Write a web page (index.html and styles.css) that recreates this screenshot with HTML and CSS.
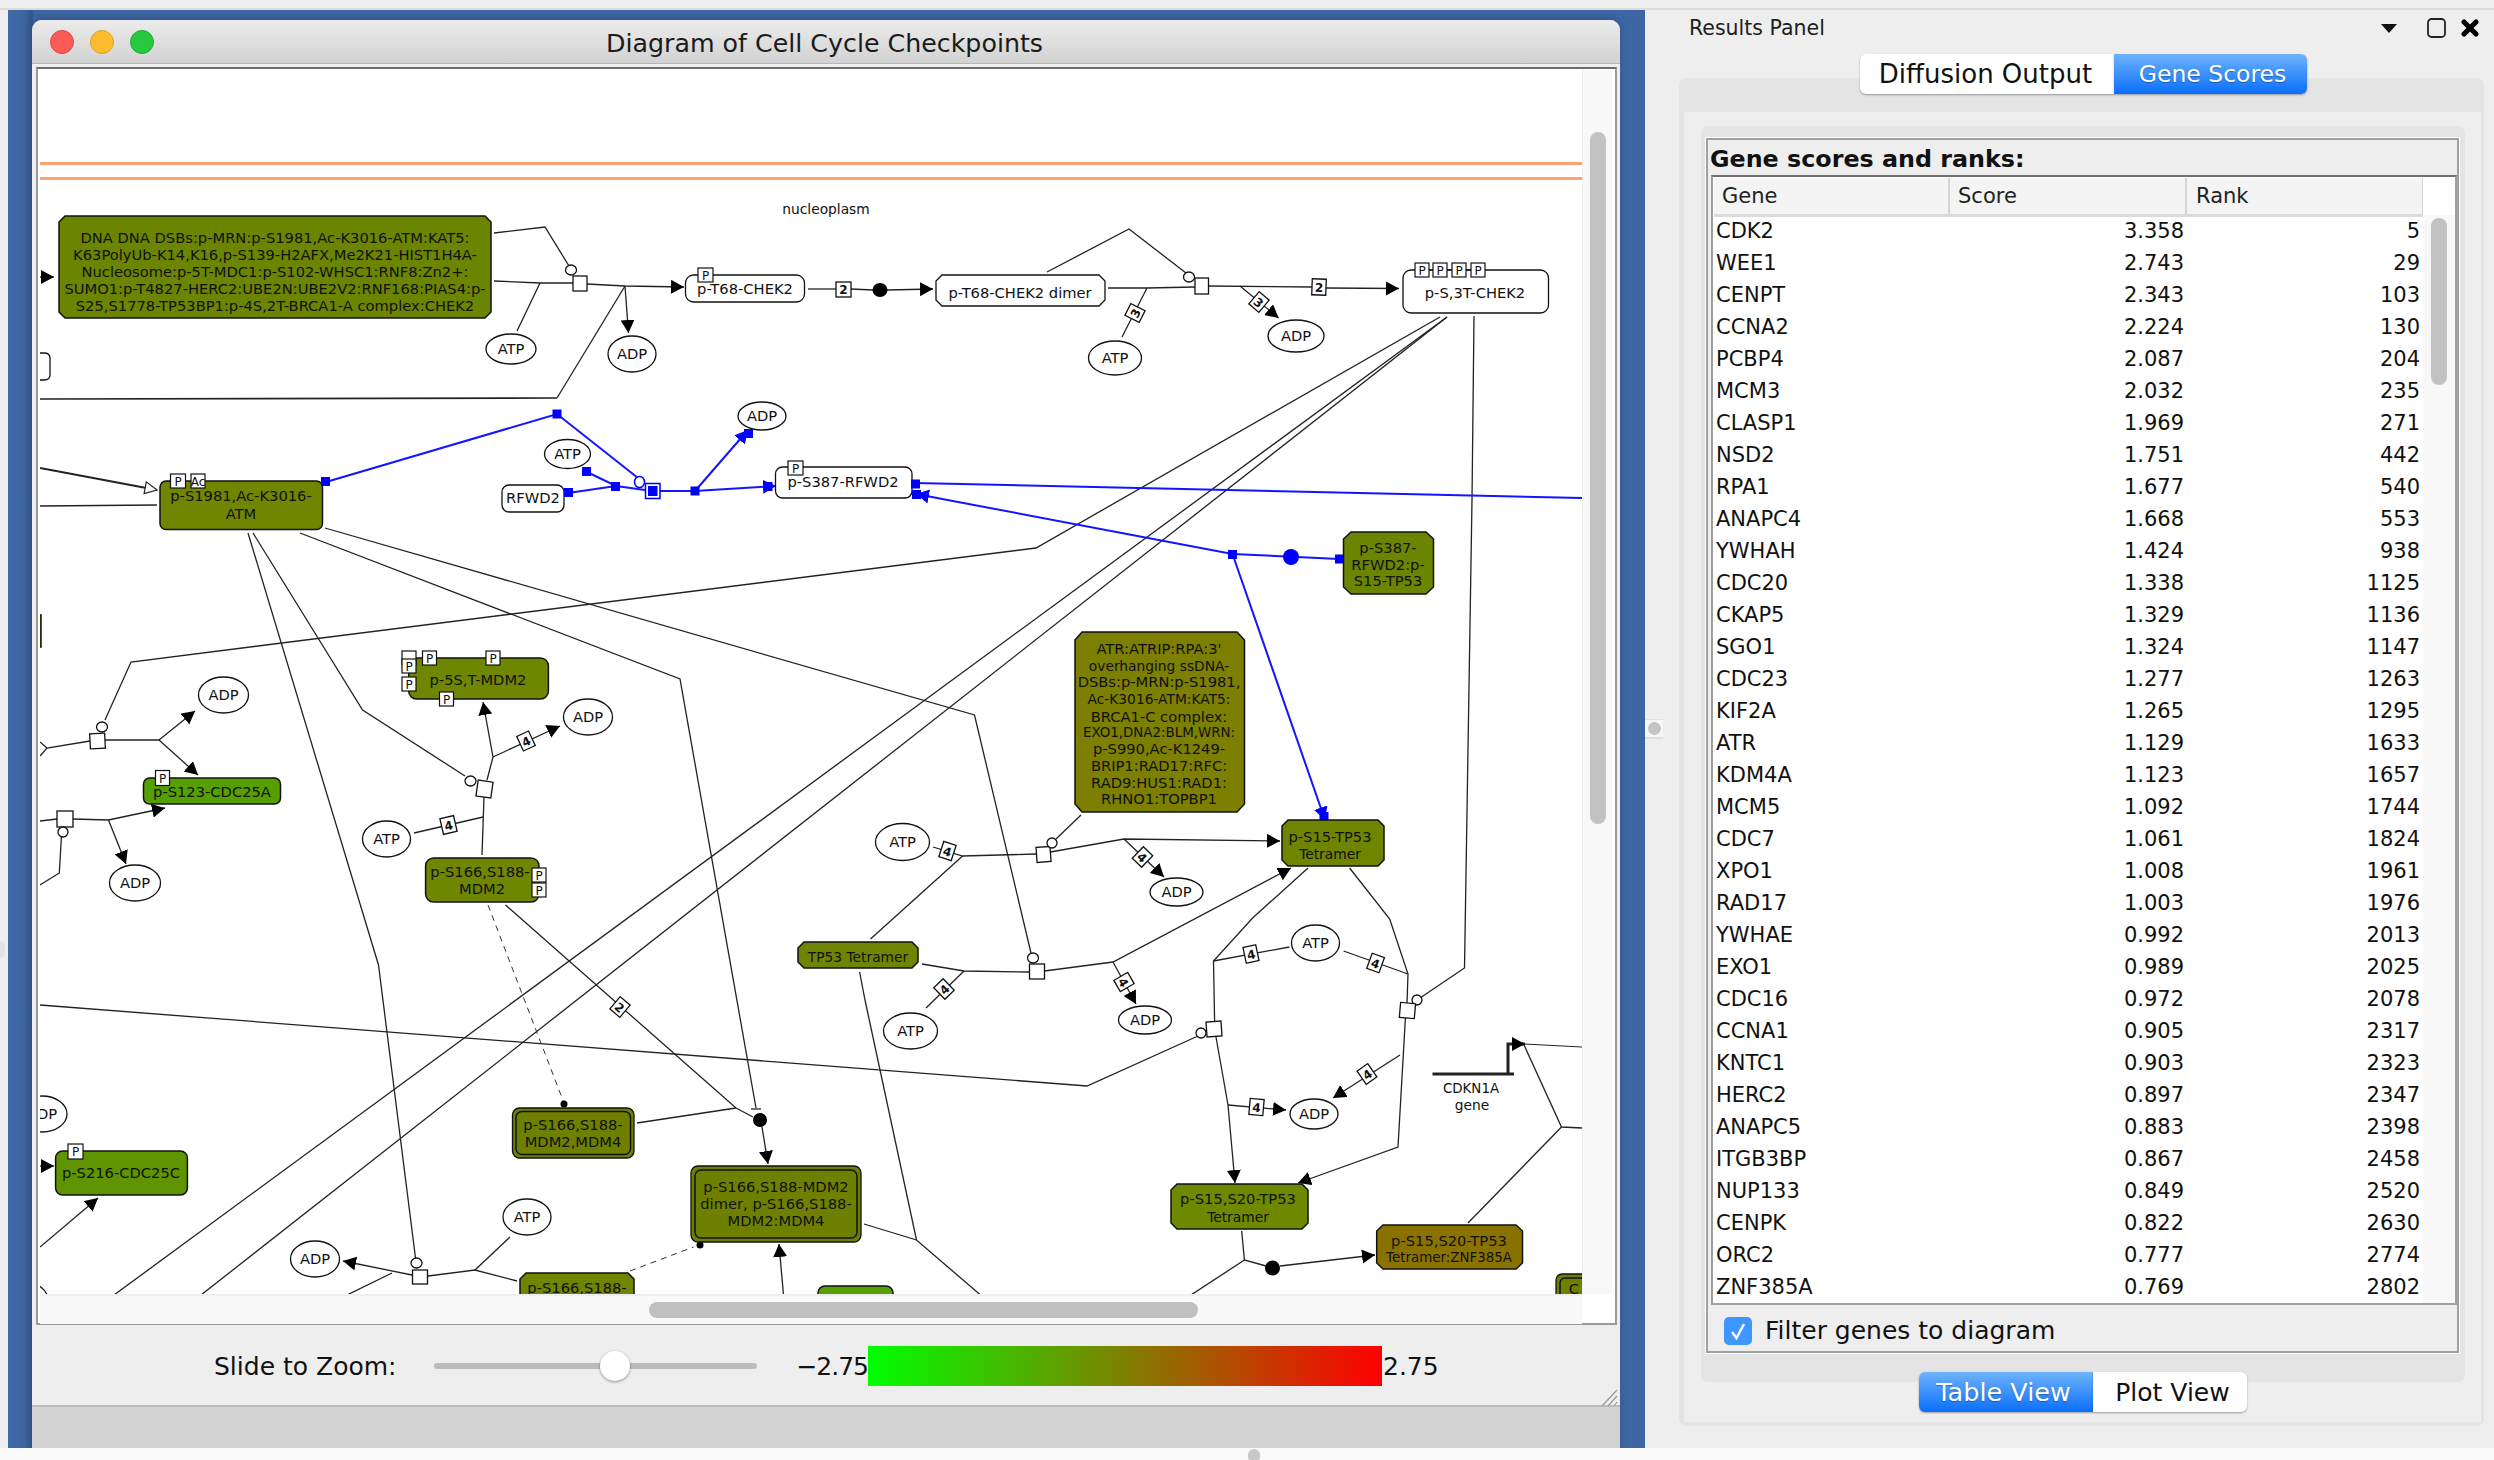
FILE: index.html
```html
<!DOCTYPE html>
<html lang="en">
<head>
<meta charset="utf-8">
<title>Diagram of Cell Cycle Checkpoints</title>
<link rel="stylesheet" href="styles.css">
</head>
<body>
<div class="app">
  <div class="topstrip"></div>
  <div class="main">
    <div class="leftgutter"><span class="leftknob"></span></div>
    <div class="desktop">
      <div class="window">
        <div class="titlebar">
          <span class="light red"></span><span class="light yellow"></span><span class="light green"></span>
          <span class="wintitle">Diagram of Cell Cycle Checkpoints</span>
        </div>
        <div class="frame">
          <div class="framerow">
            <div class="viewport">
              <svg class="diagram" width="1542" height="1224" viewBox="40 70 1542 1224" xmlns="http://www.w3.org/2000/svg">
                <defs>
                  <marker id="ah" markerUnits="userSpaceOnUse" markerWidth="16" markerHeight="16" refX="13" refY="7" orient="auto"><path d="M0 0L13 7L0 14Z" class="mk"/></marker>
                  <marker id="ab" markerUnits="userSpaceOnUse" markerWidth="16" markerHeight="16" refX="13" refY="7" orient="auto"><path d="M0 0L13 7L0 14Z" class="mkb"/></marker>
                  <marker id="ao" markerUnits="userSpaceOnUse" markerWidth="16" markerHeight="16" refX="13" refY="7" orient="auto"><path d="M1 1L13 7L1 13Z" class="mko"/></marker>
                </defs>

                <line class="orange" x1="40" y1="163.500" x2="1582" y2="163.500"/>
                <line class="orange" x1="40" y1="178.500" x2="1582" y2="178.500"/>
                <text class="t lc" x="826" y="214">nucleoplasm</text>

                <!-- long black edges -->
                <polyline class="ln" points="1440,317 1036,548 131,662 105,720"/>
                <polyline class="ln" points="1447,317 114,1295"/>
                <polyline class="ln" points="1447,317 201,1295"/>
                <polyline class="ln" points="1474,316 1472,500 1464.5,968 1420,998"/>
                <polyline class="ln" points="325,528 974.5,715 1031,953"/>
                <polyline class="ln" points="300,533 680,679 756,1108"/>
                <path class="ln" d="M751 1109H761"/>
                <polyline class="ln" points="248,533 378.5,965 415.5,1258"/>
                <polyline class="ln" points="253,533 362.6,710 465,776"/>
                <polyline class="ln" points="40,1005 1087,1086 1198,1036"/>
                <polyline class="ln" points="865,1000 859.6,972"/>
                <polyline class="ln" points="916.5,1240 865,1000"/>
                <polyline class="ln" points="864,1224 916.5,1240 980.5,1295"/>
                <polyline class="ln" points="505.5,905 736,1108 753,1117"/>
                <polyline class="ln thin" points="1523.6,1044 1582,1047"/>
                <polyline class="ln" points="1523.6,1044 1561.5,1127 1582,1128"/>
                <polyline class="ln" points="1561.5,1127 1468,1223"/>
                <polyline class="ln mid" points="40,399 557,398"/>
                <polyline class="ln" points="557,398 625,286"/>

                <!-- top row reaction -->
                <polyline class="ln" points="494,233 545,227 569,266"/>
                <polyline class="ln" points="494,281 540,283 573,283"/>
                <polyline class="ln" points="517,331 540,283"/>
                <polyline class="ln" marker-end="url(#ah)" points="587,284 625,286 684,287"/>
                <polyline class="ln" marker-end="url(#ah)" points="625,286 628.5,333"/>
                <polyline class="ln" points="808,289 836,289"/>
                <polyline class="ln" points="851,289 873,290"/>
                <polyline class="ln" marker-end="url(#ah)" points="887,290 933,289"/>
                <polyline class="ln" points="1047,272 1129,229 1186,273"/>
                <polyline class="ln" points="1108,288 1147,288 1195,287"/>
                <polyline class="ln" points="1122,337 1147,288"/>
                <polyline class="ln" points="1208,286 1312,287"/>
                <polyline class="ln" marker-end="url(#ah)" points="1326,288 1399,288.5"/>
                <polyline class="ln" marker-end="url(#ah)" points="1240,286 1278.6,318"/>
                <polyline class="ln" marker-end="url(#ah)" points="40,277 54,277"/>

                <polygon class="cx" points="65,216 485,216 491,222 491,312 485,318 65,318 59,312 59,222" style="fill:#6b8500"/>
                <text class="t" x="275" y="243">DNA DNA DSBs:p-MRN:p-S1981,Ac-K3016-ATM:KAT5:</text>
                <text class="t" x="275" y="260">K63PolyUb-K14,K16,p-S139-H2AFX,Me2K21-HIST1H4A-</text>
                <text class="t" x="275" y="277">Nucleosome:p-5T-MDC1:p-S102-WHSC1:RNF8:Zn2+:</text>
                <text class="t" x="275" y="294">SUMO1:p-T4827-HERC2:UBE2N:UBE2V2:RNF168:PIAS4:p-</text>
                <text class="t" x="275" y="311">S25,S1778-TP53BP1:p-4S,2T-BRCA1-A complex:CHEK2</text>
                <ellipse class="nd" cx="571" cy="270" rx="5.5" ry="5"/>
                <rect class="nd" x="573" y="276" width="14" height="15"/>
                <ellipse class="nd" cx="511" cy="349" rx="25" ry="15"/><text class="t" x="511" y="354">ATP</text>
                <ellipse class="nd" cx="632" cy="354" rx="24" ry="18"/><text class="t" x="632" y="359">ADP</text>
                <path class="nd" d="M40 353H44Q50 353 50 358V375Q50 380 44 380H40"/>

                <rect class="nd" x="685.500" y="275" width="119" height="27" rx="8"/>
                <text class="t" x="745" y="294">p-T68-CHEK2</text>
                <g transform="translate(705.500,275)"><rect class="pb" x="-7.500" y="-7" width="15" height="14"/><text class="ts" y="5">P</text></g>

                <rect class="sb" x="836" y="282" width="15" height="15"/><text class="tb" x="843.500" y="294">2</text>
                <ellipse class="dot" cx="880" cy="290" rx="7.500" ry="7"/>
                <polygon class="nd" points="942,275 1099,275 1105,281 1105,300 1099,306 942,306 936,300 936,281"/>
                <text class="t" x="1020" y="298">p-T68-CHEK2 dimer</text>
                <ellipse class="nd" cx="1189" cy="277" rx="5.500" ry="5"/>
                <rect class="nd" x="1195" y="278" width="13.500" height="16"/>
                <g transform="translate(1135,313) rotate(-63)"><rect class="sb" x="-6.500" y="-8" width="13" height="16"/><text class="tb" y="5">3</text></g>
                <ellipse class="nd" cx="1115" cy="358" rx="26.500" ry="17"/><text class="t" x="1115" y="363">ATP</text>
                <g transform="translate(1319,287) rotate(2)"><rect class="sb" x="-7" y="-8" width="14" height="16"/><text class="tb" y="5">2</text></g>
                <g transform="translate(1259,302) rotate(40)"><rect class="sb" x="-6.500" y="-8" width="13" height="16"/><text class="tb" y="5">3</text></g>
                <ellipse class="nd" cx="1296" cy="336" rx="28" ry="16"/><text class="t" x="1296" y="341">ADP</text>

                <rect class="nd" x="1403" y="270" width="145.500" height="43" rx="8"/>
                <text class="t" x="1475" y="298">p-S,3T-CHEK2</text>
                <path class="ln" d="M1428 270H1472"/>
                <g transform="translate(1422,270)"><rect class="pb" x="-7" y="-7" width="14" height="14"/><text class="ts" y="5">P</text></g>
                <g transform="translate(1440,270)"><rect class="pb" x="-7" y="-7" width="14" height="14"/><text class="ts" y="5">P</text></g>
                <g transform="translate(1459,270)"><rect class="pb" x="-7" y="-7" width="14" height="14"/><text class="ts" y="5">P</text></g>
                <g transform="translate(1478,270)"><rect class="pb" x="-7" y="-7" width="14" height="14"/><text class="ts" y="5">P</text></g>

                <!-- left mid: ATM -->
                <polyline class="ln thick" marker-end="url(#ao)" points="40,468 157,490"/>
                <polyline class="ln" points="40,506 157,505"/>

                <!-- blue edges -->
                <polyline class="bl" points="326,482 557,414 638,478"/>
                <polyline class="bl" points="587,472 616,486 645,490"/>
                <polyline class="bl" points="568,493 616,486"/>
                <polyline class="bl" points="660,491 695,491"/>
                <polyline class="bl" marker-end="url(#ab)" points="695,491 748,430"/>
                <polyline class="bl" marker-end="url(#ab)" points="695,491 776,486"/>
                <polyline class="bl" points="915,483 1582,498"/>
                <polyline class="bl" marker-end="url(#ab)" points="1232.5,554 916,494"/>
                <polyline class="bl" points="1232.5,554 1339,559"/>
                <polyline class="bl" marker-end="url(#ab)" points="1232.5,554 1325,820"/>

                <rect class="cx" x="160" y="481" width="162.500" height="48.500" rx="6" style="fill:#708600"/>
                <text class="t" x="241" y="501">p-S1981,Ac-K3016-</text>
                <text class="t" x="241" y="519">ATM</text>
                <g transform="translate(178,481)"><rect class="pb" x="-7.500" y="-7" width="15" height="14"/><text class="ts" y="5">P</text></g>
                <g transform="translate(198,481)"><rect class="pb" x="-7" y="-7" width="14" height="14"/><text class="ts" y="5">Ac</text></g>
                <ellipse class="nd" cx="567.500" cy="454" rx="23" ry="14.500"/><text class="t" x="567.500" y="459">ATP</text>
                <ellipse class="nd" cx="762" cy="416" rx="24" ry="14"/><text class="t" x="762" y="421">ADP</text>
                <rect class="nd" x="502" y="485" width="62" height="27" rx="7"/><text class="t" x="533" y="503">RFWD2</text>
                <rect class="nd" x="775.500" y="467" width="136.500" height="31" rx="7"/><text class="t" x="843" y="487">p-S387-RFWD2</text>
                <g transform="translate(795.500,468)"><rect class="pb" x="-7.500" y="-7" width="15" height="14"/><text class="ts" y="5">P</text></g>
                <rect class="bs" x="321" y="477" width="9" height="9"/>
                <rect class="bs" x="552.500" y="409.500" width="9" height="9"/>
                <rect class="bs" x="582" y="467" width="9" height="9"/>
                <rect class="bs" x="611" y="482" width="9" height="9"/>
                <rect class="bs" x="564" y="488" width="9" height="9"/>
                <rect class="bs" x="690.500" y="486.500" width="9" height="9"/>
                <rect class="bs" x="744" y="429" width="9" height="9"/>
                <rect class="bs" x="763.500" y="482" width="9" height="9"/>
                <rect class="bs" x="911" y="479.500" width="9" height="9"/>
                <rect class="bs" x="912" y="490" width="9" height="9"/>
                <rect class="bs" x="1228" y="550" width="9" height="9"/>
                <rect class="bs" x="1335" y="554.500" width="9" height="9"/>
                <rect class="bs" x="1319.500" y="812" width="9" height="9"/>
                <ellipse class="nb" cx="639.500" cy="482" rx="5" ry="5.500"/>
                <rect class="nb" x="645.500" y="483.500" width="14.500" height="15"/>
                <rect class="bs" x="648" y="486" width="9.500" height="10"/>
                <ellipse class="bd" cx="1291" cy="557" rx="8" ry="8"/>

                <polygon class="cx" points="1351,532 1426,532 1433.500,539 1433.500,587 1426,594 1351,594 1343.500,587 1343.500,539" style="fill:#6b8500"/>
                <text class="t" x="1388" y="553">p-S387-</text>
                <text class="t" x="1388" y="570">RFWD2:p-</text>
                <text class="t" x="1388" y="586">S15-TP53</text>

                <!-- ATR complex -->
                <polygon class="cx" points="1082,632 1237,632 1244.500,640 1244.500,804 1237,812 1082,812 1075,804 1075,640" style="fill:#7c7f00"/>
                <text class="t" x="1159" y="654">ATR:ATRIP:RPA:3'</text>
                <text class="t lc" x="1159" y="671">overhanging ssDNA-</text>
                <text class="t" x="1159" y="687">DSBs:p-MRN:p-S1981,</text>
                <text class="t lc" x="1159" y="704">Ac-K3016-ATM:KAT5:</text>
                <text class="t" x="1159" y="722">BRCA1-C complex:</text>
                <text class="t xs" x="1159" y="737">EXO1,DNA2:BLM,WRN:</text>
                <text class="t" x="1159" y="754">p-S990,Ac-K1249-</text>
                <text class="t" x="1159" y="771">BRIP1:RAD17:RFC:</text>
                <text class="t" x="1159" y="788">RAD9:HUS1:RAD1:</text>
                <text class="t" x="1159" y="804">RHNO1:TOPBP1</text>

                <polygon class="cx" points="1288,820 1378,820 1384,826 1384,860 1378,866 1288,866 1282,860 1282,826" style="fill:#6f8500"/>
                <text class="t" x="1330" y="842">p-S15-TP53</text>
                <text class="t lc" x="1330" y="859">Tetramer</text>

                <!-- left reactions -->
                <polyline class="ln" points="40,742 47,748"/>
                <polyline class="ln" points="40,756 47,748 90,741"/>
                <polyline class="ln" points="105,740 159,740"/>
                <polyline class="ln" marker-end="url(#ah)" points="159,740 195,711"/>
                <polyline class="ln" marker-end="url(#ah)" points="159,740 198,775"/>
                <ellipse class="nd" cx="102" cy="727" rx="5.500" ry="5"/>
                <rect class="nd" x="90" y="733.500" width="15" height="15" transform="rotate(-3 97 741)"/>
                <ellipse class="nd" cx="223.500" cy="695" rx="25" ry="18"/><text class="t" x="223.500" y="700">ADP</text>

                <rect class="cx" x="143.500" y="778" width="137" height="26" rx="6" style="fill:#55a000"/>
                <text class="t" x="212" y="797">p-S123-CDC25A</text>
                <g transform="translate(162.500,778)"><rect class="pb" x="-7" y="-7.500" width="14" height="15"/><text class="ts" y="5">P</text></g>

                <polyline class="ln" points="40,821 57,819"/>
                <polyline class="ln" marker-end="url(#ah)" points="73,819 108.500,820 165,808"/>
                <polyline class="ln" marker-end="url(#ah)" points="108.500,820 126,864"/>
                <polyline class="ln" points="61.400,837 59.300,873 40,885"/>
                <rect class="nd" x="57" y="811" width="16" height="16"/>
                <ellipse class="nd" cx="63" cy="832" rx="5" ry="5"/>
                <ellipse class="nd" cx="135" cy="883" rx="25.500" ry="18"/><text class="t" x="135" y="888">ADP</text>
                <rect class="cx" x="30" y="615" width="11" height="32" style="fill:#6f8600"/>

                <!-- MDM2 -->
                <rect class="cx" x="408.700" y="658" width="139.700" height="41" rx="8" style="fill:#6f8600"/>
                <text class="t" x="478" y="685">p-5S,T-MDM2</text>
                <rect class="pb" x="402" y="651" width="14" height="14"/>
                <g transform="translate(429.500,658)"><rect class="pb" x="-7" y="-7" width="14" height="14"/><text class="ts" y="5">P</text></g>
                <g transform="translate(493,658)"><rect class="pb" x="-7" y="-7" width="14" height="14"/><text class="ts" y="5">P</text></g>
                <g transform="translate(409,666)"><rect class="pb" x="-7" y="-7" width="14" height="14"/><text class="ts" y="5">P</text></g>
                <g transform="translate(409,684)"><rect class="pb" x="-7" y="-7" width="14" height="14"/><text class="ts" y="5">P</text></g>
                <g transform="translate(446.500,699)"><rect class="pb" x="-7" y="-7" width="14" height="14"/><text class="ts" y="5">P</text></g>

                <polyline class="ln" marker-end="url(#ah)" points="487,780 493,757 483,702"/>
                <polyline class="ln" marker-end="url(#ah)" points="493,757 560,726"/>
                <polyline class="ln" points="414,833 483,817"/>
                <polyline class="ln" points="482,855 484,797"/>
                <ellipse class="nd" cx="470.500" cy="781" rx="5.500" ry="5"/>
                <rect class="nd" x="477" y="781" width="15" height="16" transform="rotate(8 484 789)"/>
                <ellipse class="nd" cx="588" cy="717" rx="24.500" ry="18"/><text class="t" x="588" y="722">ADP</text>
                <ellipse class="nd" cx="386.500" cy="839" rx="24" ry="18"/><text class="t" x="386.500" y="844">ATP</text>
                <g transform="translate(526,741) rotate(-25)"><rect class="sb" x="-6.500" y="-8" width="13" height="16"/><text class="tb" y="5">4</text></g>
                <g transform="translate(448.500,825) rotate(-13)"><rect class="sb" x="-7" y="-8" width="14" height="16"/><text class="tb" y="5">4</text></g>

                <rect class="cx" x="425.600" y="858" width="113.400" height="44" rx="8" style="fill:#6f8600"/>
                <text class="t" x="480" y="877">p-S166,S188-</text>
                <text class="t" x="482" y="894">MDM2</text>
                <g transform="translate(539,875)"><rect class="pb" x="-7" y="-7" width="14" height="14"/><text class="ts" y="5">P</text></g>
                <g transform="translate(539,890)"><rect class="pb" x="-7" y="-7" width="14" height="14"/><text class="ts" y="5">P</text></g>

                <line class="ds" x1="488" y1="905" x2="564" y2="1103"/>
                <circle class="dot" cx="564" cy="1104" r="3.500"/>
                <line class="ds" x1="630" y1="1271" x2="693.500" y2="1247"/>
                <circle class="dot" cx="700" cy="1245" r="3.500"/>
                <g transform="translate(620,1007) rotate(40)"><rect class="sb" x="-6.500" y="-8" width="13" height="16"/><text class="tb" y="5">2</text></g>

                <!-- TP53 -->
                <polyline class="ln" points="922,964 964,971 1029,972"/>
                <polyline class="ln" points="964,971 926,1008"/>
                <polyline class="ln" marker-end="url(#ah)" points="1044.500,971 1113,962 1291,868"/>
                <polyline class="ln" marker-end="url(#ah)" points="1113,962 1136,1004"/>
                <polyline class="ln" points="933,847 962.600,856 1036,854"/>
                <polyline class="ln" points="870.500,939 962.600,856"/>
                <polyline class="ln" points="1081,815 1056,839"/>
                <polyline class="ln" marker-end="url(#ah)" points="1050.400,852 1124,839 1280,841"/>
                <polyline class="ln" marker-end="url(#ah)" points="1124,839 1164,877"/>
                <polyline class="ln" points="1308,868 1252.600,918 1213.500,961 1214.600,1021"/>
                <polyline class="ln" points="1349.600,868 1389.700,919 1408,974 1407,1003"/>
                <polyline class="ln" points="1289.400,947 1213.500,961"/>
                <polyline class="ln" points="1343.600,951 1408,974"/>
                <polyline class="ln" marker-end="url(#ah)" points="1216,1037 1228,1105 1235,1183"/>
                <polyline class="ln" marker-end="url(#ah)" points="1228,1105 1286,1110"/>
                <polyline class="ln" marker-end="url(#ah)" points="1405.400,1018 1398,1147 1298,1183"/>
                <polyline class="ln" marker-end="url(#ah)" points="1400,1055 1333,1098"/>
                <ellipse class="nd" cx="902.500" cy="842" rx="27" ry="18.500"/><text class="t" x="902.500" y="847">ATP</text>
                <g transform="translate(947.500,851) rotate(18)"><rect class="sb" x="-6.500" y="-8" width="13" height="16"/><text class="tb" y="5">4</text></g>
                <rect class="nd" x="1036.500" y="847" width="14" height="15" transform="rotate(-4 1043 854)"/>
                <ellipse class="nd" cx="1052" cy="843" rx="5" ry="5"/>
                <g transform="translate(1142.500,857) rotate(44)"><rect class="sb" x="-6.500" y="-8" width="13" height="16"/><text class="tb" y="5">4</text></g>
                <ellipse class="nd" cx="1176.500" cy="892" rx="26.500" ry="14"/><text class="t" x="1176.500" y="897">ADP</text>

                <polygon class="cx" points="804,942 912,942 918,948 918,962 912,968 804,968 798,962 798,948" style="fill:#6f8500"/>
                <text class="t lc" x="858" y="962">TP53 Tetramer</text>
                <ellipse class="nd" cx="1033" cy="958" rx="5.500" ry="5"/>
                <rect class="nd" x="1029.500" y="964" width="15" height="15"/>
                <g transform="translate(944,989) rotate(-44)"><rect class="sb" x="-6.500" y="-8" width="13" height="16"/><text class="tb" y="5">4</text></g>
                <g transform="translate(1124,982) rotate(60)"><rect class="sb" x="-6.500" y="-8" width="13" height="16"/><text class="tb" y="5">4</text></g>
                <ellipse class="nd" cx="910.500" cy="1031" rx="27" ry="18"/><text class="t" x="910.500" y="1036">ATP</text>
                <ellipse class="nd" cx="1145" cy="1020" rx="26.500" ry="14"/><text class="t" x="1145" y="1025">ADP</text>
                <ellipse class="nd" cx="1315.500" cy="943" rx="24" ry="18"/><text class="t" x="1315.500" y="948">ATP</text>
                <g transform="translate(1251,954) rotate(-12)"><rect class="sb" x="-6.500" y="-8" width="13" height="16"/><text class="tb" y="5">4</text></g>
                <g transform="translate(1375.600,963) rotate(20)"><rect class="sb" x="-6.500" y="-8" width="13" height="16"/><text class="tb" y="5">4</text></g>
                <ellipse class="nd" cx="1417" cy="1000" rx="5" ry="5"/>
                <rect class="nd" x="1400" y="1003" width="15" height="15" transform="rotate(5 1407 1010)"/>
                <ellipse class="nd" cx="1201" cy="1033" rx="5" ry="5"/>
                <rect class="nd" x="1206.500" y="1021.500" width="15" height="15" transform="rotate(-4 1214 1029)"/>
                <g transform="translate(1256.500,1107) rotate(5)"><rect class="sb" x="-7" y="-8" width="14" height="16"/><text class="tb" y="5">4</text></g>
                <g transform="translate(1367,1074) rotate(-35)"><rect class="sb" x="-6.500" y="-8" width="13" height="16"/><text class="tb" y="5">4</text></g>
                <ellipse class="nd" cx="1314" cy="1114" rx="24" ry="15"/><text class="t" x="1314" y="1119">ADP</text>

                <!-- gene -->
                <polyline class="gn" points="1432.500,1074 1514,1074"/>
                <polyline class="gn" marker-end="url(#ah)" points="1508,1074 1508,1044 1525,1044"/>
                <text class="t xs" x="1471" y="1093">CDKN1A</text>
                <text class="t lc" x="1472" y="1110">gene</text>

                <polygon class="cx" points="1177,1184 1302,1184 1308,1190 1308,1223 1302,1229 1177,1229 1171,1223 1171,1190" style="fill:#6e8800"/>
                <text class="t" x="1238" y="1204">p-S15,S20-TP53</text>
                <text class="t lc" x="1238" y="1222">Tetramer</text>
                <polygon class="cx" points="1383,1225 1516,1225 1522.500,1231 1522.500,1263 1516,1269 1383,1269 1376.700,1263 1376.700,1231" style="fill:#8a7200"/>
                <text class="t" x="1449" y="1246">p-S15,S20-TP53</text>
                <text class="t xs" x="1449" y="1262">Tetramer:ZNF385A</text>
                <polyline class="ln" points="1241.700,1231 1244.400,1260 1266,1266"/>
                <polyline class="ln" points="1244.400,1260 1191,1295"/>
                <polyline class="ln" marker-end="url(#ah)" points="1280,1266 1375,1255"/>
                <ellipse class="dot" cx="1272.500" cy="1268" rx="7.500" ry="7.500"/>
                <rect class="dbl" x="1556" y="1274" width="40" height="50" rx="6"/>
                <rect class="dbl2" x="1560" y="1278" width="32" height="42" rx="5"/>
                <text class="t" x="1574" y="1294">C</text>

                <!-- bottom -->
                <ellipse class="nd" cx="42" cy="1114" rx="25" ry="18"/><text class="t" x="42" y="1119">ADP</text>
                <polyline class="ln" marker-end="url(#ah)" points="40,1166 54,1166"/>
                <rect class="cx" x="55.600" y="1151" width="131.800" height="44" rx="7" style="fill:#5f9400"/>
                <text class="t" x="121" y="1178">p-S216-CDC25C</text>
                <g transform="translate(75.500,1151)"><rect class="pb" x="-7.500" y="-7" width="15" height="15"/><text class="ts" y="5">P</text></g>
                <polyline class="ln" marker-end="url(#ah)" points="40,1247 98,1198"/>
                <ellipse class="nd" cx="24" cy="1300" rx="24" ry="18"/>

                <rect class="dbl" x="512.500" y="1108" width="121.500" height="50" rx="7"/>
                <rect class="dbl2" x="516" y="1111.500" width="114.500" height="43" rx="6"/>
                <text class="t" x="573" y="1130">p-S166,S188-</text>
                <text class="t" x="573" y="1147">MDM2,MDM4</text>
                <polyline class="ln" points="637,1123 736,1108"/>
                <ellipse class="dot" cx="760" cy="1120" rx="7" ry="7"/>
                <polyline class="ln" marker-end="url(#ah)" points="762,1127 768,1164"/>

                <rect class="dbl" x="691" y="1166" width="170" height="76" rx="7"/>
                <rect class="dbl2" x="695" y="1170" width="162" height="68" rx="6"/>
                <text class="t" x="776" y="1192">p-S166,S188-MDM2</text>
                <text class="t" x="776" y="1209">dimer, p-S166,S188-</text>
                <text class="t" x="776" y="1226">MDM2:MDM4</text>

                <polyline class="ln" marker-end="url(#ah)" points="783.500,1295 779,1244"/>
                <polyline class="ln" marker-end="url(#ah)" points="412,1275 343,1261"/>
                <polyline class="ln" points="392,1273 347,1295"/>
                <polyline class="ln" points="510,1237 475,1270"/>
                <polyline class="ln" points="428,1276 475,1270 517,1281"/>
                <ellipse class="nd" cx="416.500" cy="1263" rx="5.500" ry="5"/>
                <rect class="nd" x="412.500" y="1270" width="15" height="14"/>
                <ellipse class="nd" cx="527" cy="1217" rx="24" ry="18"/><text class="t" x="527" y="1222">ATP</text>
                <ellipse class="nd" cx="315" cy="1259" rx="24.500" ry="18"/><text class="t" x="315" y="1264">ADP</text>

                <polygon class="cx" points="526,1273 628,1273 634,1279 634,1310 520,1310 520,1279" style="fill:#6f8500"/>
                <text class="t" x="577" y="1293">p-S166,S188-</text>
                <rect class="cx" x="818" y="1286" width="75" height="30" rx="7" style="fill:#55a000"/>
              </svg>
            </div>
            <div class="vtrack"><span class="vthumb"></span></div>
          </div>
          <div class="htrack"><span class="hthumb"></span></div>
        </div>
        <div class="controls">
          <span class="zoomlabel">Slide to Zoom:</span>
          <div class="slider"><span class="knob"></span></div>
          <span class="minval">−2.75</span>
          <div class="gradient"></div>
          <span class="maxval">2.75</span>
          <svg class="grip" width="18" height="20" viewBox="0 0 18 20" xmlns="http://www.w3.org/2000/svg"><path d="M2 19L17 3M8 19L17 9M14 19L17 15"/></svg>
        </div>
        <div class="statusbar"></div>
      </div>
    </div>
    <aside class="results">
      <span class="sash"><span class="sashknob"></span></span>
      <header class="rhead">
        <span class="rtitle">Results Panel</span>
        <span class="rcontrols">
          <svg class="ric" width="16" height="9" viewBox="0 0 16 9" xmlns="http://www.w3.org/2000/svg"><path d="M0 0H16L8 9Z"/></svg>
          <svg class="ric2" width="19" height="20" viewBox="0 0 19 20" xmlns="http://www.w3.org/2000/svg"><rect x="1" y="1" width="17" height="18" rx="3.500"/></svg>
          <svg class="ric3" width="18" height="18" viewBox="0 0 18 18" xmlns="http://www.w3.org/2000/svg"><path d="M3 3L15 15M15 3L3 15"/></svg>
        </span>
      </header>
      <div class="seg segtop">
        <button class="segbtn wdiff">Diffusion Output</button>
        <button class="segbtn on wgene">Gene Scores</button>
      </div>
      <div class="outerbox">
        <div class="innerpane">
          <div class="groupbox">
            <div class="scorepanel">
              <div class="scoretitle">Gene scores and ranks:</div>
              <div class="tableframe">
                <div class="tablewrap">
                  <table class="scores">
                    <colgroup><col class="c1"><col class="c2"><col class="c3"></colgroup>
                    <thead><tr><th>Gene</th><th>Score</th><th class="rankhead">Rank</th></tr></thead>
                    <tbody>
                      <tr><td>CDK2</td><td>3.358</td><td>5</td></tr>
                      <tr><td>WEE1</td><td>2.743</td><td>29</td></tr>
                      <tr><td>CENPT</td><td>2.343</td><td>103</td></tr>
                      <tr><td>CCNA2</td><td>2.224</td><td>130</td></tr>
                      <tr><td>PCBP4</td><td>2.087</td><td>204</td></tr>
                      <tr><td>MCM3</td><td>2.032</td><td>235</td></tr>
                      <tr><td>CLASP1</td><td>1.969</td><td>271</td></tr>
                      <tr><td>NSD2</td><td>1.751</td><td>442</td></tr>
                      <tr><td>RPA1</td><td>1.677</td><td>540</td></tr>
                      <tr><td>ANAPC4</td><td>1.668</td><td>553</td></tr>
                      <tr><td>YWHAH</td><td>1.424</td><td>938</td></tr>
                      <tr><td>CDC20</td><td>1.338</td><td>1125</td></tr>
                      <tr><td>CKAP5</td><td>1.329</td><td>1136</td></tr>
                      <tr><td>SGO1</td><td>1.324</td><td>1147</td></tr>
                      <tr><td>CDC23</td><td>1.277</td><td>1263</td></tr>
                      <tr><td>KIF2A</td><td>1.265</td><td>1295</td></tr>
                      <tr><td>ATR</td><td>1.129</td><td>1633</td></tr>
                      <tr><td>KDM4A</td><td>1.123</td><td>1657</td></tr>
                      <tr><td>MCM5</td><td>1.092</td><td>1744</td></tr>
                      <tr><td>CDC7</td><td>1.061</td><td>1824</td></tr>
                      <tr><td>XPO1</td><td>1.008</td><td>1961</td></tr>
                      <tr><td>RAD17</td><td>1.003</td><td>1976</td></tr>
                      <tr><td>YWHAE</td><td>0.992</td><td>2013</td></tr>
                      <tr><td>EXO1</td><td>0.989</td><td>2025</td></tr>
                      <tr><td>CDC16</td><td>0.972</td><td>2078</td></tr>
                      <tr><td>CCNA1</td><td>0.905</td><td>2317</td></tr>
                      <tr><td>KNTC1</td><td>0.903</td><td>2323</td></tr>
                      <tr><td>HERC2</td><td>0.897</td><td>2347</td></tr>
                      <tr><td>ANAPC5</td><td>0.883</td><td>2398</td></tr>
                      <tr><td>ITGB3BP</td><td>0.867</td><td>2458</td></tr>
                      <tr><td>NUP133</td><td>0.849</td><td>2520</td></tr>
                      <tr><td>CENPK</td><td>0.822</td><td>2630</td></tr>
                      <tr><td>ORC2</td><td>0.777</td><td>2774</td></tr>
                      <tr><td>ZNF385A</td><td>0.769</td><td>2802</td></tr>
                    </tbody>
                  </table>
                </div>
                <div class="tscroll"><span class="tthumb"></span></div>
              </div>
              <label class="filter"><span class="check"><svg width="16" height="20" viewBox="0 0 16 20" xmlns="http://www.w3.org/2000/svg"><path d="M2 11L6.500 17L14 3"/></svg></span>Filter genes to diagram</label>
            </div>
          </div>
          <div class="seg segbottom">
            <button class="segbtn on wtable">Table View</button>
            <button class="segbtn wplot">Plot View</button>
          </div>
        </div>
      </div>
    </aside>
  </div>
  <div class="bottomstrip"><span class="bottomknob"></span></div>
</div>
</body>
</html>
```
FILE: styles.css
```css
* { box-sizing: border-box; }
html, body { margin: 0; padding: 0; }
body { font-family: "DejaVu Sans", sans-serif; color: #111; }
.app { width: 2494px; height: 1460px; display: flex; flex-direction: column; background: #fafafa; overflow: hidden; }
.topstrip { height: 10px; flex: none; background: #eeeeee; border-bottom: 2px solid #dcdcdc; }
.main { height: 1438px; flex: none; display: flex; }
.bottomstrip { height: 12px; flex: none; display: flex; justify-content: flex-start; padding-left: 1248px; background: #fafafa; }
.bottomknob { width: 12px; height: 14px; margin-top: 1px; border-radius: 6px; background: #c8c8c8; }

.leftgutter { width: 8px; flex: none; background: #efefef; padding-top: 931px; }
.leftknob { display: block; width: 5px; height: 17px; background: #e3e3e3; border-radius: 0 6px 6px 0; }

.desktop { width: 1637px; flex: none; background: linear-gradient(90deg, #4169a8 0, #3d65a1 16px, #33558a 24px, #3e66a4 26px); padding: 10px 25px 0 24px; background-repeat: no-repeat; }
.window { height: 1428px; display: flex; flex-direction: column; background: #eeeeee; border-radius: 10px 10px 0 0; box-shadow: 0 -2px 6px rgba(30,50,90,.35); }
.titlebar { height: 44px; flex: none; display: flex; align-items: center; padding-left: 18px; position: relative; border-radius: 10px 10px 0 0; background: linear-gradient(#ececec, #d2d2d2); border-bottom: 1px solid #b5b5b5; }
.light { width: 24px; height: 24px; border-radius: 50%; margin-right: 16px; }
.red { background: #fc5b57; border: 1px solid #e0443e; }
.yellow { background: #fdbc2e; border: 1px solid #dea123; }
.green { background: #26c940; border: 1px solid #1eaa2f; }
.wintitle { position: absolute; left: 0; right: 0; top: 8px; text-align: center; font-size: 25.300px; line-height: 32px; color: #1a1a1a; padding-right: 3px; }

.frame { margin: 3px 3px 0 4px; height: 1258px; flex: none; background: #fff; border: 2px solid #9a9a9a; border-top: 2px solid #6c6c6c; display: flex; flex-direction: column; }
.framerow { height: 1225px; flex: none; display: flex; padding-left: 2px; padding-top: 1px; }
.viewport { width: 1542px; height: 1224px; flex: none; overflow: hidden; }
.diagram { display: block; }
.vtrack { width: 30px; flex: none; height: 100%; background: #f8f8f8; border-left: 1px solid #eeeeee; padding: 62px 7px 0 7px; }
.vthumb { display: block; width: 16px; height: 692px; border-radius: 8px; background: #c2c2c2; }
.htrack { height: 30px; flex: none; margin-left: 2px; width: 1542px; background: #f9f9f9; border-top: 2px solid #eeeeee; padding: 6px 0 0 609px; }
.hthumb { display: block; width: 549px; height: 16px; border-radius: 8px; background: #c0c0c0; }

.controls { height: 81px; flex: none; display: flex; align-items: center; background: #eeeeee; margin-top: 1px; padding-left: 182px; position: relative; border-bottom: 2px solid #bdbdbd; font-size: 25px; }
.zoomlabel { width: 220px; flex: none; white-space: nowrap; padding-top: 2px; }
.slider { width: 323px; height: 6px; flex: none; background: #bbbbbb; border-radius: 3px; position: relative; }
.knob { position: absolute; left: 166px; top: -12px; width: 30px; height: 30px; border-radius: 50%; background: #fff; box-shadow: 0 1px 3px rgba(0,0,0,.4); }
.minval { width: 111px; flex: none; text-align: right; white-space: nowrap; padding-top: 2px; letter-spacing: -1px; }
.gradient { width: 514px; height: 40px; flex: none; background: linear-gradient(90deg, #00ff00, #ff0000); }
.maxval { margin-left: 1px; white-space: nowrap; padding-top: 2px; }
.grip { position: absolute; right: 2px; bottom: -2px; }
.grip path { fill: none; stroke: #9a9a9a; stroke-width: 1.200; }
.statusbar { flex: 1; background: #d3d3d3; }

/* diagram */
.orange { stroke: #ffa070; stroke-width: 3; }
.ln { fill: none; stroke: #222; stroke-width: 1.300; }
.thin { stroke-width: 1.200; }
.mid { stroke-width: 1.700; }
.thick { stroke-width: 2.200; }
.gn { fill: none; stroke: #222; stroke-width: 3; }
.bl { fill: none; stroke: #1414ff; stroke-width: 2; }
.mk { fill: #000; }
.mkb { fill: #0000ff; }
.mko { fill: #fff; stroke: #222; stroke-width: 1.200; }
.nd { fill: #fff; stroke: #111; stroke-width: 1.300; }
.nb { fill: #fff; stroke: #0000ff; stroke-width: 1.500; }
.bs { fill: #0000ff; }
.bd { fill: #0000ff; }
.dot { fill: #000; }
.cx { stroke: #111; stroke-width: 1.500; }
.dbl { fill: #6f8000; stroke: #111; stroke-width: 1.300; }
.dbl2 { fill: #6f8000; stroke: #111; stroke-width: 1.500; }
.ds { stroke: #333; stroke-width: 1; stroke-dasharray: 6 5; }
.t { font-family: "DejaVu Sans", sans-serif; font-size: 14.700px; text-anchor: middle; fill: #111; }
.lc { font-size: 13.800px; }
.xs { font-size: 13.400px; }
.pb { fill: #fff; stroke: #111; stroke-width: 1.200; }
.sb { fill: #fff; stroke: #111; stroke-width: 1.300; }
.ts { font-family: "DejaVu Sans", sans-serif; font-size: 12px; text-anchor: middle; fill: #111; }
.tb { font-family: "DejaVu Sans", sans-serif; font-size: 12px; font-weight: 700; text-anchor: middle; fill: #111; }

/* results */
.results { flex: 1; background: #eeeeee; padding: 0 10px 0 34px; position: relative; }
.sash { position: absolute; left: 0; top: 709px; width: 18px; height: 20px; display: flex; align-items: center; justify-content: center; background: #f6f6f6; border-top: 1px solid #e2e2e2; border-bottom: 2px solid #dddddd; }
.sashknob { display: block; width: 13px; height: 13px; border-radius: 50%; background: #c4c4c4; }
.rhead { height: 44px; display: flex; align-items: center; justify-content: space-between; padding: 0 2px 8px 10px; }
.rtitle { font-size: 20.500px; color: #1c1c1c; }
.rcontrols { display: flex; align-items: center; }
.ric { fill: #111; margin-right: 30px; }
.ric2 { fill: none; stroke: #222; stroke-width: 1.800; margin-right: 15px; }
.ric3 { fill: none; stroke: #000; stroke-width: 5; stroke-linecap: round; margin-right: 3px; }
.seg { display: flex; justify-content: center; position: relative; z-index: 1; }
.segtop { margin: 0 0 -16px 4px; }
.segbtn { height: 40px; border: 0; padding: 0; background: #fff; font-family: "DejaVu Sans", sans-serif; color: #111; box-shadow: 0 1px 2px rgba(0,0,0,.35); border-radius: 6px 0 0 6px; white-space: nowrap; }
.segbtn + .segbtn { border-radius: 0 6px 6px 0; }
.segbtn.on { background: linear-gradient(#6fb3fb, #0a6ffb); color: #fff; text-shadow: 0 1px 1px rgba(0,0,0,.3); }
.wdiff { width: 254px; font-size: 26px; padding-right: 3px; }
.wgene { width: 193px; font-size: 23.500px; padding-left: 4px; }
.wtable { width: 174px; font-size: 25.500px; padding-right: 5px; }
.wplot { width: 154px; font-size: 25px; padding-left: 5px; }
.outerbox { height: 1348px; background: #e4e4e4; border-radius: 7px; padding: 34px 3px 4px 5px; }
.innerpane { height: 100%; background: #eeeeee; padding: 14px 16px 0 17px; }
.groupbox { height: 1256px; background: #e4e4e4; border-radius: 7px; padding: 12px 6px 0 5px; }
.scorepanel { height: 1215px; background: #eeeeee; border: 2px solid #a0a0a0; outline: 1px solid #fff; display: flex; flex-direction: column; }
.scoretitle { height: 35px; flex: none; font-size: 23.800px; font-weight: 700; line-height: 38px; padding-left: 2px; white-space: nowrap; }
.tableframe { height: 1130px; flex: none; margin-left: 3px; background: #fff; border-top: 2px solid #707070; border-left: 2px solid #a0a0a0; border-right: 2px solid #a0a0a0; border-bottom: 2px solid #a0a0a0; display: flex; padding-top: 1px; }
.tablewrap { width: 709px; flex: none; margin-left: 1px; overflow: hidden; }
.scores { width: 709px; table-layout: fixed; border-collapse: collapse; font-size: 21px; }
.c1 { width: 235px; }
.c2 { width: 237px; }
.c3 { width: 237px; }
.scores th { height: 37px; padding: 1px 0 0 8px; background: #f4f4f4; border-bottom: 3px solid #dadada; border-right: 2px solid #d5d5d5; font-weight: 400; text-align: left; color: #222; font-size: 21px; }
.scores .rankhead { padding-left: 9px; }
.scores td { height: 32px; padding: 0 3px 3px 2px; text-align: right; color: #111; line-height: 29px; white-space: nowrap; overflow: hidden; }
.scores td:nth-child(2) { padding-right: 2px; }
.scores td:first-child { text-align: left; }
.tscroll { flex: 1; background: #f8f8f8; margin-top: 37px; padding: 3px 0 0 8px; }
.tthumb { display: block; width: 16px; height: 167px; border-radius: 8px; background: #c2c2c2; }
.filter { flex: 1; display: flex; align-items: center; padding: 5px 0 0 16px; font-size: 25px; }
.check { width: 28px; height: 28px; margin-right: 13px; border-radius: 5px; background: #3e97ff; display: flex; align-items: center; justify-content: center; }
.check path { fill: none; stroke: #fff; stroke-width: 2.400; }
.segbottom { margin: -10px 0 0 0; }
```
